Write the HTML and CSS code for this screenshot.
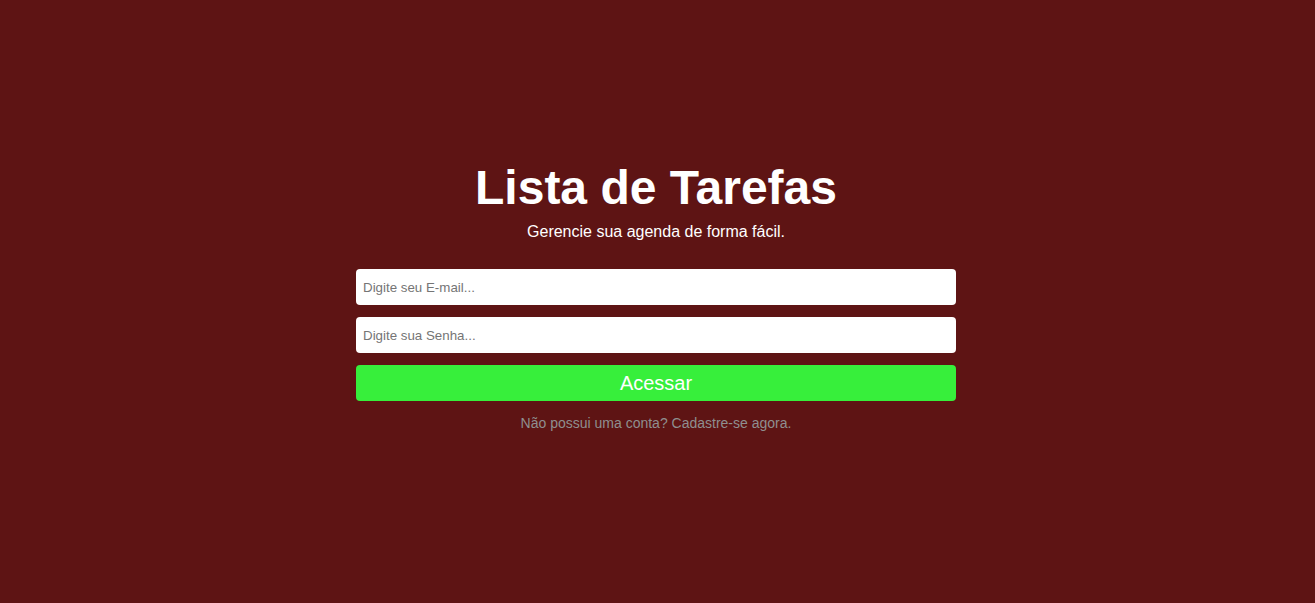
FILE: index.html
```html
<!DOCTYPE html>
<html lang="pt-BR">
<head>
<meta charset="utf-8">
<title>Lista de Tarefas</title>
<link rel="stylesheet" href="styles.css">
</head>
<body>
<main class="page">
  <div class="login">
    <h1 class="title">Lista de Tarefas</h1>
    <p class="subtitle">Gerencie sua agenda de forma fácil.</p>
    <form class="form">
      <input class="field" type="email" placeholder="Digite seu E-mail...">
      <input class="field" type="password" placeholder="Digite sua Senha...">
      <button class="submit" type="button">Acessar</button>
    </form>
    <a class="signup" href="#">Não possui uma conta? Cadastre-se agora.</a>
  </div>
</main>
</body>
</html>
```

FILE: styles.css
```css
* { box-sizing: border-box; }
html, body {
  margin: 0;
  height: 100%;
}
body {
  background: #5e1414;
  font-family: "Liberation Sans", Arial, sans-serif;
}
.page {
  height: 100%;
  display: flex;
  align-items: center;
  justify-content: center;
  padding-bottom: 12px;
  padding-right: 3px;
}
.login {
  width: 600px;
  display: flex;
  flex-direction: column;
  align-items: center;
}
.title {
  margin: 0;
  color: #ffffff;
  font-size: 48px;
  font-weight: bold;
  line-height: 55px;
}
.subtitle {
  margin: 8px 0 0;
  color: #ffffff;
  font-size: 16px;
  line-height: 18px;
}
.form {
  width: 100%;
  margin-top: 28px;
  display: flex;
  flex-direction: column;
  gap: 12px;
}
.field {
  width: 100%;
  height: 36px;
  border: none;
  border-radius: 4px;
  background: #ffffff;
  padding: 0 7px;
  font-family: "Liberation Sans", Arial, sans-serif;
  font-size: 13.33px;
  color: #333;
  outline: none;
}
.field::placeholder { color: #757575; }
.submit {
  width: 100%;
  height: 36px;
  border: none;
  border-radius: 4px;
  background: #37ef3b;
  color: #ffffff;
  font-family: "Liberation Sans", Arial, sans-serif;
  font-size: 20px;
  cursor: pointer;
}
.signup {
  margin-top: 14px;
  color: #8f8f8f;
  font-size: 14px;
  line-height: 16px;
  text-decoration: none;
}
```
